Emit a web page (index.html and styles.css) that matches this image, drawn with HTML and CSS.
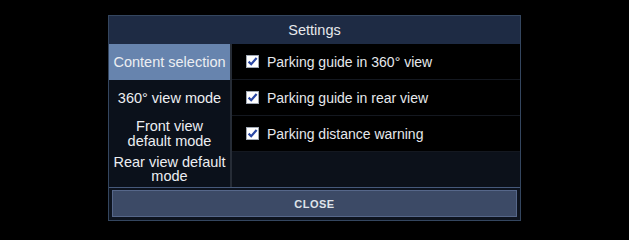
FILE: index.html
```html
<!DOCTYPE html>
<html>
<head>
<meta charset="utf-8">
<link rel="stylesheet" href="styles.css">
</head>
<body>
<div class="dialog">
  <div class="title">Settings</div>
  <div class="body">
    <div class="menu">
      <div class="item selected">Content selection</div>
      <div class="item">360° view mode</div>
      <div class="item">Front view<br>default mode</div>
      <div class="item">Rear view default<br>mode</div>
    </div>
    <div class="sep"></div>
    <div class="content">
      <div class="row">
        <svg class="check" viewBox="0 0 13 13" width="13" height="13"><rect x="0.5" y="0.5" width="12" height="12" fill="#fff" stroke="#a0a8b4"/><path d="M2.6 6.6 L5.2 9.2 L10.6 3.0" fill="none" stroke="#2a47a3" stroke-width="2.2"/></svg>
        <span>Parking guide in 360° view</span>
      </div>
      <div class="row">
        <svg class="check" viewBox="0 0 13 13" width="13" height="13"><rect x="0.5" y="0.5" width="12" height="12" fill="#fff" stroke="#a0a8b4"/><path d="M2.6 6.6 L5.2 9.2 L10.6 3.0" fill="none" stroke="#2a47a3" stroke-width="2.2"/></svg>
        <span>Parking guide in rear view</span>
      </div>
      <div class="row">
        <svg class="check" viewBox="0 0 13 13" width="13" height="13"><rect x="0.5" y="0.5" width="12" height="12" fill="#fff" stroke="#a0a8b4"/><path d="M2.6 6.6 L5.2 9.2 L10.6 3.0" fill="none" stroke="#2a47a3" stroke-width="2.2"/></svg>
        <span>Parking distance warning</span>
      </div>
    </div>
  </div>
  <div class="footer">
    <div class="close">CLOSE</div>
  </div>
</div>
</body>
</html>
```
FILE: styles.css
```css
html, body {
  margin: 0;
  padding: 0;
  background: #000;
}
body {
  width: 629px;
  height: 236px;
  font-family: "Liberation Sans", Arial, sans-serif;
  color: #e8eaee;
  padding: 15px 0 0 108px;
  box-sizing: border-box;
}
.dialog {
  width: 413px;
  height: 206px;
  box-sizing: border-box;
  border: 1px solid #34465f;
  background: #0c111a;
  display: flex;
  flex-direction: column;
}
.title {
  height: 28px;
  background: #1e2b44;
  display: flex;
  align-items: center;
  justify-content: center;
  font-size: 14.5px;
  color: #e6e8ec;
}
.body {
  height: 143px;
  display: flex;
  border-bottom: 1px solid #46597a;
}
.menu {
  width: 121px;
  background: #0b111b;
  display: flex;
  flex-direction: column;
}
.item {
  flex: 1;
  display: flex;
  align-items: center;
  justify-content: center;
  text-align: center;
  font-size: 14.5px;
  line-height: 14.5px;
  color: #eceef2;
}
.item.selected {
  background: #6784ae;
  flex: 0 0 36px;
}
.sep {
  width: 2px;
  background: #262c36;
}
.content {
  flex: 1;
  background: #0c111a;
  display: flex;
  flex-direction: column;
}
.row {
  height: 35px;
  background: #000;
  border-bottom: 1px solid #141820;
  display: flex;
  align-items: center;
  padding-left: 14px;
  gap: 8px;
  font-size: 14px;
  color: #e6e8ec;
}
.check {
  flex: 0 0 13px;
}
.footer {
  flex: 1;
  padding: 2px 3px 3px 3px;
  background: #0d131e;
}
.close {
  height: 27px;
  box-sizing: border-box;
  border: 1px solid #56678a;
  background: #3c4a66;
  display: flex;
  align-items: center;
  justify-content: center;
  font-size: 11px;
  font-weight: bold;
  letter-spacing: 0.5px;
  color: #dfe3ea;
}
```
